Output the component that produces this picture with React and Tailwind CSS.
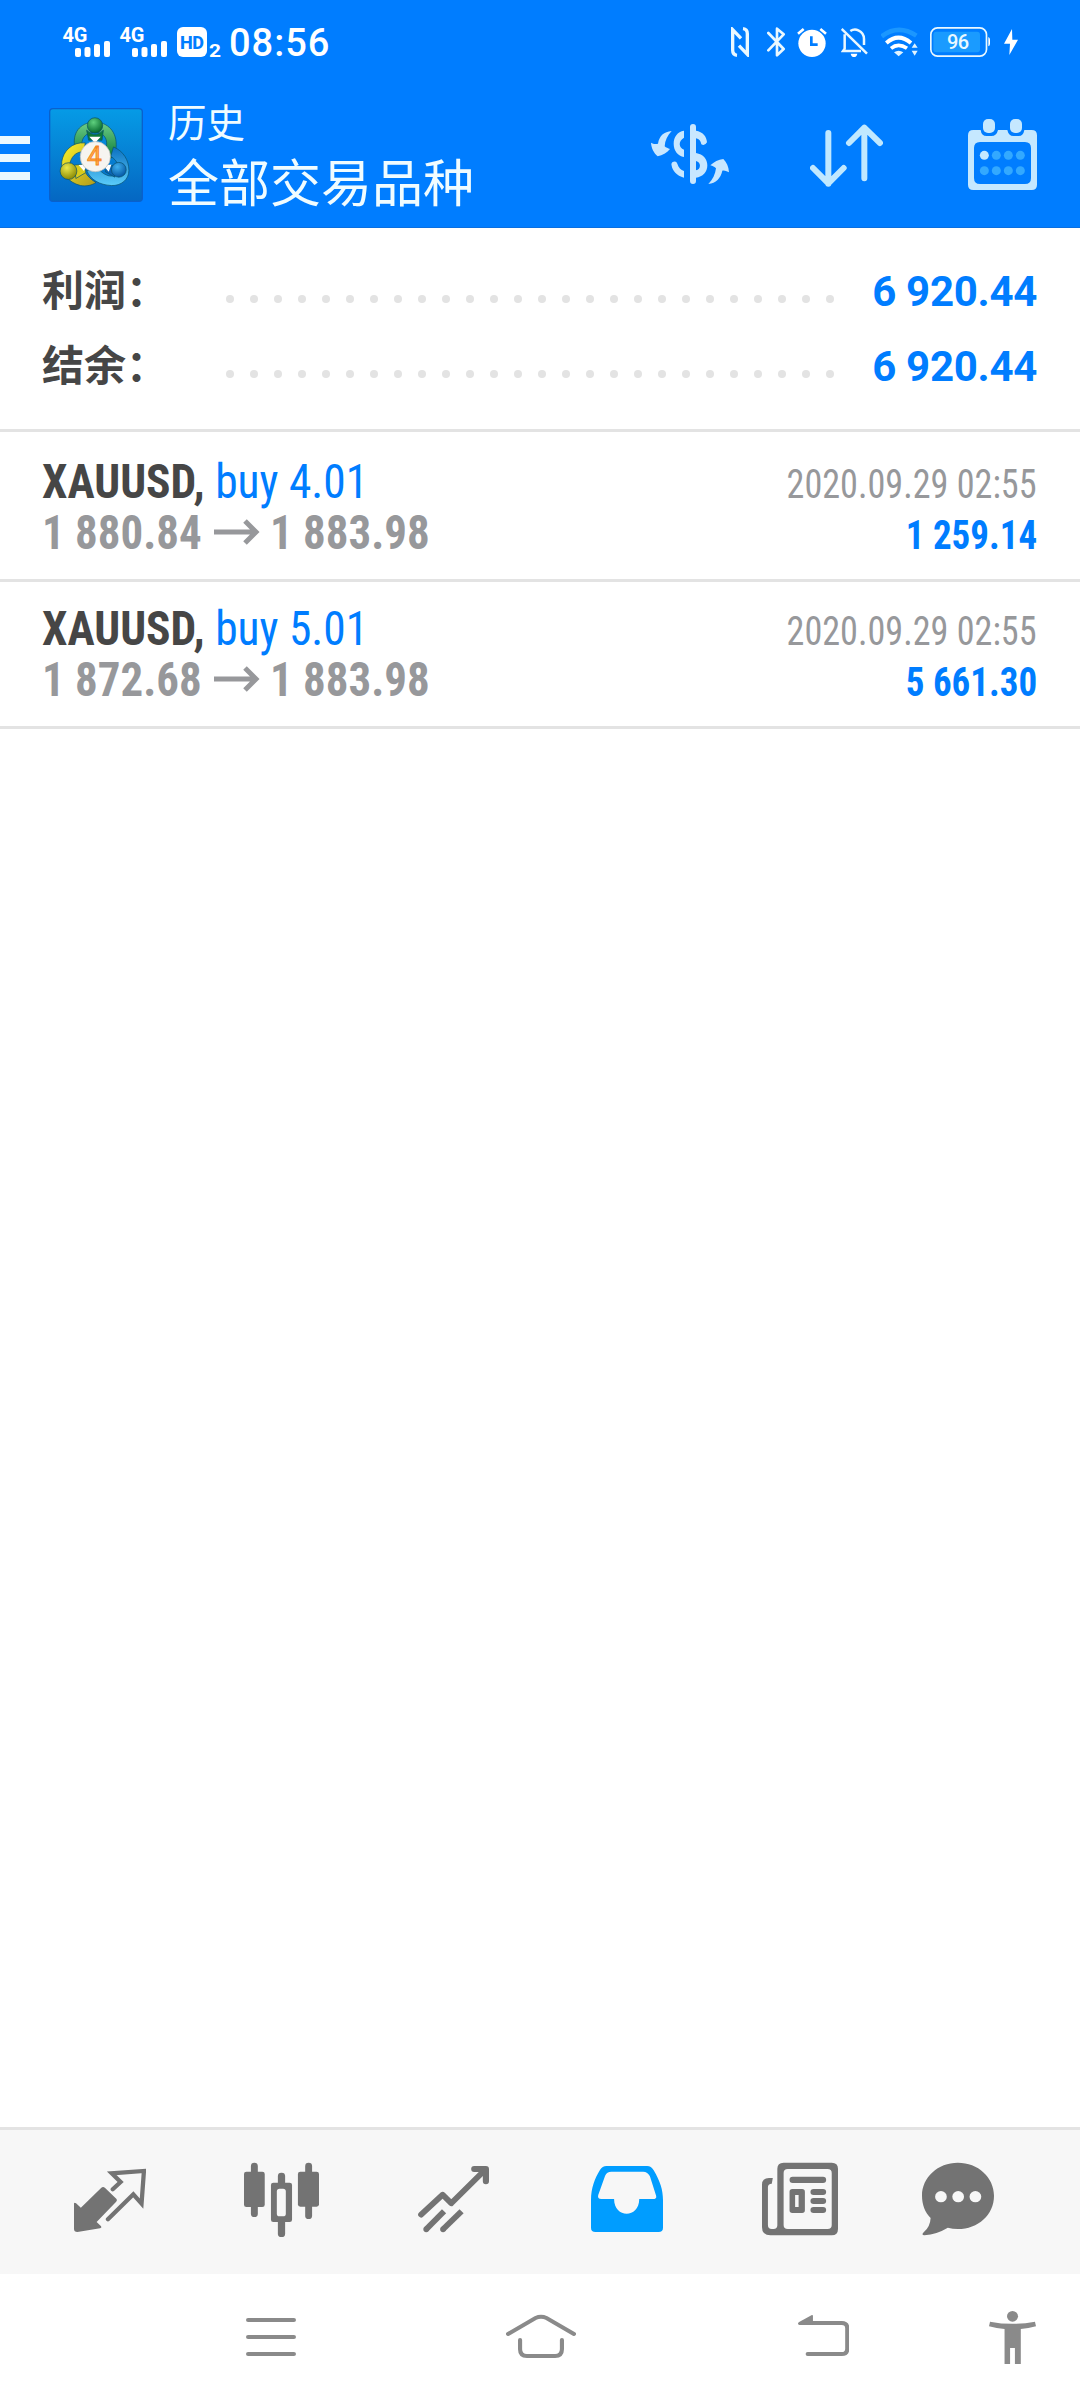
import React from "react";

const trades = [
  { symbol: "XAUUSD", side: "buy 4.01", open: "1 880.84", close: "1 883.98", time: "2020.09.29 02:55", profit: "1 259.14" },
  { symbol: "XAUUSD", side: "buy 5.01", open: "1 872.68", close: "1 883.98", time: "2020.09.29 02:55", profit: "5 661.30" },
];

const summary = [
  { label: "利润：", value: "6 920.44" },
  { label: "结余：", value: "6 920.44" },
];

const Signal = () => (
  <svg className="overflow-visible" width="48" height="32" viewBox="0 0 48 32" fill="#fff">
    <text x="-0.5" y="16" fontFamily="Roboto" fontWeight="700" fontSize="20" textLength="25">4G</text>
    <rect x="12" y="22" width="6" height="9" rx="2" />
    <rect x="21.5" y="21" width="6" height="10" rx="2" />
    <rect x="31" y="18" width="6" height="13" rx="2" />
    <rect x="41" y="15" width="6" height="16" rx="2" />
  </svg>
);

const StatusBar = () => (
  <div className="flex h-[84px] items-center pl-[63px] pr-[62px] text-white">
    <Signal />
    <div className="ml-[9px]">
      <Signal />
    </div>
    <svg className="ml-[9px] overflow-visible" width="44" height="32" viewBox="0 0 44 32">
      <rect x="0" y="1" width="30" height="30" rx="6" fill="#fff" />
      <text x="3" y="22.5" fontFamily="Roboto" fontWeight="800" fontSize="18" textLength="24" fill="#007dff">HD</text>
      <text x="32" y="30.5" fontFamily="Roboto" fontWeight="700" fontSize="18" textLength="12" lengthAdjust="spacingAndGlyphs" fill="#fff">2</text>
    </svg>
    <span className="ml-[8px] pt-[2px] text-[38px] font-medium tracking-[1px]">08:56</span>

    {/* nfc */}
    <svg className="ml-auto" width="18" height="30" viewBox="0 0 54 90" fill="none" stroke="#eaf8ff" strokeWidth="10">
      <path d="M18 85 C9 84 5 80 5 70 V8 L30 34 M36 5 C45 6 49 10 49 20 V82 L24 56" />
    </svg>
    {/* bluetooth */}
    <svg className="ml-[18px]" width="19" height="30" viewBox="0 0 57 90" fill="none" stroke="#eaf8ff" strokeWidth="8" strokeLinejoin="round" strokeLinecap="round">
      <path d="M4 18 L50 66 L30 85 V5 L50 22 L4 70" />
    </svg>
    {/* alarm */}
    <svg className="ml-[11px]" width="30" height="30" viewBox="0 0 90 90">
      <circle cx="45" cy="49" r="41" fill="#fff" />
      <path d="M3 20 L20 6 M87 20 L70 6" stroke="#fff" strokeWidth="8" />
      <path d="M43 28 V53 H62" fill="none" stroke="#007dff" strokeWidth="8" />
    </svg>
    {/* muted bell */}
    <svg className="ml-[14px]" width="27" height="30" viewBox="0 0 81 90" fill="none" stroke="#eaf8ff" strokeWidth="7.5">
      <path d="M2 6 L78 80 M11 22 V65 L6 72 H60 M28 12 Q40 4 52 10 Q69 18 69 36 V54" />
      <path d="M29 80 H49 Q47 90 39 90 T29 80Z" fill="#fff" stroke="none" />
    </svg>
    {/* wifi */}
    <svg className="ml-[13px]" width="38" height="30" viewBox="0 0 114 90" fill="none">
      <path d="M2 28 Q52 -10 106 26" stroke="#1b97ff" strokeWidth="14" />
      <path d="M16 48 Q52 16 90 48" stroke="#fff" strokeWidth="12" />
      <path d="M30 64 Q52 46 78 64" stroke="#fff" strokeWidth="11" />
      <path d="M39 76 Q53 66 67 76 L53 88Z M92 62 L101 49 L110 62Z M92 71 H110 L101 86Z" fill="#dff3ff" />
    </svg>
    {/* battery */}
    <svg className="ml-[11px]" width="60" height="30" viewBox="0 0 180 90">
      <rect x="2.5" y="2.5" width="167" height="85" rx="20" fill="none" stroke="#eaf8ff" strokeWidth="5" />
      <rect x="10" y="14" width="140" height="62" rx="9" fill="#1a9bff" />
      <path d="M175 30 Q180 32 180 38 V50 Q180 56 175 58Z" fill="#fff" />
      <text x="51" y="66" fontFamily="Roboto" fontWeight="500" fontSize="60" textLength="66" fill="#eaf8ff">96</text>
    </svg>
    {/* charging */}
    <svg className="ml-[14px]" width="14" height="26" viewBox="0 0 42 78" fill="#fff">
      <path d="M24 0 L0 44 H18 L16 78 L42 32 H25Z" />
    </svg>
  </div>
);

const Logo = () => (
  <svg className="ml-[19px]" width="94" height="94" viewBox="0 0 280 280">
    <defs>
      <linearGradient id="tile" x1="0" y1="0" x2="0" y2="1">
        <stop offset="0" stopColor="#069be6" />
        <stop offset="1" stopColor="#0567c2" />
      </linearGradient>
      <linearGradient id="green" x1="0" y1="0" x2="0" y2="1">
        <stop offset="0" stopColor="#6fce88" />
        <stop offset="1" stopColor="#087a37" />
      </linearGradient>
      <linearGradient id="yellow" x1="0" y1="0" x2="1" y2="1">
        <stop offset="0" stopColor="#fbf32a" />
        <stop offset="1" stopColor="#b29a1c" />
      </linearGradient>
      <linearGradient id="blue" x1="0" y1="0" x2="0" y2="1">
        <stop offset="0" stopColor="#0a6fc0" />
        <stop offset="1" stopColor="#5bcdfa" />
      </linearGradient>
      <radialGradient id="greenBall" cx=".4" cy=".3" r=".7">
        <stop offset="0" stopColor="#5fd07e" />
        <stop offset="1" stopColor="#06692d" />
      </radialGradient>
      <radialGradient id="yellowBall" cx=".4" cy=".3" r=".7">
        <stop offset="0" stopColor="#ece94c" />
        <stop offset="1" stopColor="#8b8a05" />
      </radialGradient>
      <radialGradient id="blueBall" cx=".4" cy=".3" r=".7">
        <stop offset="0" stopColor="#3fb0ee" />
        <stop offset="1" stopColor="#0558a6" />
      </radialGradient>
    </defs>
    <rect x="2" y="2" width="276" height="276" rx="10" fill="url(#tile)" stroke="#0a60cc" strokeWidth="4" />
    <g stroke="#07506a" strokeWidth="2">
      <path d="M76 112 C70 66 100 42 137 42 C174 42 204 70 200 118 C198 134 192 144 182 152 L166 130 C180 100 168 72 136 72 C112 72 98 88 98 106Z" fill="url(#green)" />
      <path d="M192 116 C222 128 238 156 238 186 C238 214 214 232 186 231 C150 229 124 214 112 186 L150 184 C168 204 190 208 204 196 C212 178 206 158 184 144Z" fill="url(#blue)" />
      <path d="M108 104 C68 100 42 130 38 160 C34 190 56 222 94 231 C112 234 128 230 140 222 C120 210 108 196 104 180 L60 172 C66 146 78 130 104 130Z" fill="url(#yellow)" />
      <path d="M112 66 Q137 92 162 66 L158 96 H118Z" fill="#0c7a3a" />
      <path d="M76 170 L104 168 L110 192 L80 210Z" fill="#d9cb1c" />
      <path d="M200 170 L172 174 L168 190 L196 206Z" fill="#0b64b4" />
      <circle cx="137" cy="52" r="23" fill="url(#greenBall)" />
      <circle cx="58" cy="188" r="25" fill="url(#yellowBall)" />
      <circle cx="208" cy="184" r="22" fill="url(#blueBall)" />
    </g>
    <path d="M120 86 H154 L137 104Z M88 170 L114 168 L104 188Z M186 168 L162 172 L178 190Z" fill="#fff" />
    <circle cx="138" cy="145" r="45" fill="#f6f4f0" stroke="#b9b9b5" strokeWidth="2" />
    <text x="113" y="171" fontFamily="Roboto" fontWeight="400" fontSize="76" textLength="44" lengthAdjust="spacingAndGlyphs" fill="#ffb04a" stroke="#f58220" strokeWidth="2.5">4</text>
  </svg>
);

const Header = () => (
  <header className="h-[228px] border-b border-[#0a6fe0] bg-[#007dff]">
    <StatusBar />
    <div className="flex h-[143px] items-center pb-0.5">
      <div className="flex w-[30px] flex-col gap-2.5 pt-[7px]">
        <div className="h-2 bg-[#eaf8ff]" />
        <div className="h-2 bg-[#eaf8ff]" />
        <div className="h-2 bg-[#eaf8ff]" />
      </div>
      <Logo />
      <div className="ml-[25px] pb-[5px] font-['Noto_Sans_CJK_SC',sans-serif] font-normal text-[#f0fcff]">
        <div className="text-[38.5px] leading-[56px]">历史</div>
        <div className="text-[51px] leading-[64px]">全部交易品种</div>
      </div>

      {/* deposit / currency switch */}
      <svg className="ml-auto" width="78" height="71" viewBox="93 72 234 213" fill="#c8e7ff">
        <path d="M155 108 C132 110 118 122 114 146 C104 148 99 146 93 143 C94 160 102 174 113 184 C128 181 140 174 150 162 C144 160 138 158 134 154 C135 136 142 122 155 108Z" />
        <path d="M265 267 C288 264 302 250 307 227 C316 226 322 230 327 232 C326 214 320 202 310 192 C295 194 282 200 271 211 C278 213 284 215 288 220 C286 238 278 254 265 267Z" />
        <path d="M192 107 C172 110 161 126 161 146 C161 168 174 182 192 186 V164 C176 158 174 138 192 128Z" />
        <path d="M192 248 C170 242 157 226 155 212 A9 9 0 0 1 172 206 C176 218 182 224 192 228Z" />
        <path fillRule="evenodd" d="M228 107 C248 110 260 124 261 142 Q254 154 244 148 C242 138 238 132 228 130 V174 C250 178 262 192 262 211 C262 232 248 246 228 248 V258 A9 9 0 0 1 210 258 V96 A9 9 0 0 1 228 96Z M228 198 V226 C244 224 244 201 228 198Z" />
      </svg>
      {/* sort */}
      <svg className="ml-[81px]" width="73" height="71" viewBox="569 72 219 213" fill="none" stroke="#c0e8ff" strokeWidth="18" strokeLinecap="round" strokeLinejoin="round">
        <path d="M624 114 V266 M578 219 L624 265 L670 219" />
        <path d="M732 250 V98 M686 144 L732 98 L779 144" />
      </svg>
      {/* calendar */}
      <svg className="ml-[85px] mr-[43px]" width="69" height="71" viewBox="1044 72 207 213">
        <path fillRule="evenodd" fill="#c5e8ff" d="M1060 105 H1082 Q1084 123 1100 123 H1114 Q1130 123 1134 105 H1162 Q1166 123 1180 123 H1196 Q1210 123 1213 105 H1235 Q1251 105 1251 121 V269 Q1251 285 1235 285 H1060 Q1044 285 1044 269 V121 Q1044 105 1060 105Z M1080 141 Q1062 141 1062 159 V249 Q1062 267 1080 267 H1215 Q1233 267 1233 249 V159 Q1233 141 1215 141Z" />
        <rect x="1089" y="72" width="36" height="42" rx="15" fill="#c5e8ff" />
        <rect x="1170" y="72" width="36" height="42" rx="15" fill="#c5e8ff" />
        {[1093, 1129, 1165, 1201].map((x) => (
          <g key={x} fill="#33a9ff">
            <circle cx={x} cy="181" r="13.5" fill={x === 1093 ? "#c5e8ff" : "#33a9ff"} />
            <circle cx={x} cy="227" r="13.5" />
          </g>
        ))}
      </svg>
    </div>
  </header>
);

const SummaryRow = ({ label, value }) => (
  <div className="flex h-[75px] items-center pl-[42px] pr-[43px]">
    <span className="w-[184px] pb-[6px] font-['Noto_Sans_CJK_SC',sans-serif] text-[42px] font-bold leading-[69px] text-[#464646]">{label}</span>
    <div className="flex gap-4 pt-[17px]">
      {Array.from({ length: 26 }).map((_, i) => (
        <span key={i} className="size-2 rounded-full bg-[#e3e3e3]" />
      ))}
    </div>
    <span className="ml-auto pt-px text-[42px] font-bold tracking-[-0.3px] text-[#007dff]">{value}</span>
  </div>
);

const TradeRow = ({ trade }) => (
  <div className="h-[147px] whitespace-nowrap border-b-[3px] border-[#e3e3e3] pl-[42px] pr-[43px] pt-[21px] font-['Roboto_Condensed',Roboto,sans-serif] [font-stretch:75%]">
    <div className="flex h-[51px] items-baseline justify-between leading-[51px]">
      <div className="origin-left scale-x-[0.947] text-[48px] text-[#007dff]">
        <span className="font-bold text-[#464646]">{trade.symbol},</span> {trade.side}
      </div>
      <div className="origin-right scale-x-[0.904] text-[40px] text-[#97989b]">{trade.time}</div>
    </div>
    <div className="flex h-[51px] items-baseline justify-between font-bold leading-[51px]">
      <div className="flex text-[48px] text-[#97989b]">
        <span className="w-[172px] origin-left scale-x-[0.936]">{trade.open}</span>
        <svg className="mr-2.5 mt-3" width="46" height="26" viewBox="0 0 46 26" fill="none" stroke="#97989b" strokeWidth="5">
          <path d="M0 13 H42 M31 2 L42 13 L31 24" />
        </svg>
        <span className="origin-left scale-x-[0.936]">{trade.close}</span>
      </div>
      <div className="origin-right scale-x-[0.925] text-[40px] text-[#007dff]">{trade.profit}</div>
    </div>
  </div>
);

const TabBar = () => (
  <nav className="flex h-[147px] items-center border-t-[3px] border-[#e3e3e3] bg-[#f7f7f7] pb-1 pl-[74px]">
    {/* quotes */}
    <svg width="72" height="80" viewBox="215 150 210 240" preserveAspectRatio="none" fill="#737373">
      <path d="M215 280 Q217 276 221 280 L235 293 L294 234 Q299 229 305 233 L339 267 Q342 271 338 275 L281 336 L294 349 Q297 353 291 355 L225 366 Q215 366 215 357Z" />
      <path d="M328 238 L351 216 L325 190 L419 183 L412 281 L388 253 L314 328" fill="none" stroke="#737373" strokeWidth="12.5" strokeLinecap="round" />
    </svg>
    {/* chart */}
    <svg className="ml-[98px]" width="75" height="80" viewBox="709 150 217 240" preserveAspectRatio="none" fill="#737373">
      <rect x="729" y="158" width="20" height="163" rx="10" />
      <rect x="709" y="185" width="60" height="106" rx="7" />
      <rect x="886" y="158" width="20" height="169" rx="10" />
      <rect x="865" y="185" width="61" height="105" rx="7" />
      <rect x="807" y="188" width="21" height="40" rx="10" />
      <rect x="807" y="325" width="21" height="56" rx="10" />
      <path fillRule="evenodd" d="M794 218 H841 Q848 218 848 225 V329 Q848 336 841 336 H794 Q787 336 787 329 V225 Q787 218 794 218Z M812 236 Q804 236 804 244 V311 Q804 319 812 319 H822 Q830 319 830 311 V244 Q830 236 822 236Z" />
    </svg>
    {/* trade */}
    <svg className="ml-[99px]" width="71" height="80" viewBox="1213 150 207 240" preserveAspectRatio="none" fill="none" stroke="#737373" strokeWidth="17" strokeLinejoin="round">
      <path d="M1222 314 L1285 254 L1310 280 L1408 180" strokeLinecap="round" />
      <path d="M1377 177 H1411 V214" strokeWidth="18" strokeLinecap="round" />
      <path d="M1237 358 L1289 304" />
      <path d="M1286 358 L1340 304" />
      <path d="M1237 358 h.1 M1286 358 h.1" strokeLinecap="round" />
    </svg>
    {/* history */}
    <svg className="ml-[102px]" width="72" height="80" viewBox="147 150 209 240" preserveAspectRatio="none">
      <path fill="#009dff" fillRule="evenodd" d="M192 168 H310 Q322 168 329 181 C348 215 356 240 356 270 V353 Q356 366 343 366 H160 Q147 366 147 353 V270 C147 235 158 205 173 180 Q180 168 192 168Z M206 185 Q193 185 188 197 L168 255 Q165 267 177 267 H214 C214 326 287 326 287 267 H326 Q339 267 336 257 L318 199 Q312 185 298 185Z" />
    </svg>
    {/* news */}
    <svg className="ml-[99px]" width="76" height="80" viewBox="646 150 218 240" preserveAspectRatio="none" fill="#737373">
      <path fillRule="evenodd" d="M690 176 Q690 158 708 158 H846 Q864 158 864 176 V357 Q864 376 846 376 H670 Q646 376 646 352 V224 Q646 204 666 204 H677 L674 221 Q663 221 663 232 V345 Q663 357 674 357 H679 Q690 357 690 346Z M720 177 Q708 177 708 189 V345 Q708 357 720 357 H834 Q846 357 846 345 V189 Q846 177 834 177Z" />
      <rect x="725" y="200" width="105" height="19" rx="9" />
      <path fillRule="evenodd" d="M733 237 H761 Q769 237 769 245 V301 Q769 309 761 309 H733 Q725 309 725 301 V245 Q725 237 733 237Z M741 255 V291 H751 V255Z" />
      <rect x="785" y="237" width="45" height="18" rx="9" />
      <rect x="785" y="264" width="45" height="18" rx="9" />
      <rect x="785" y="291" width="45" height="18" rx="9" />
    </svg>
    {/* chat */}
    <svg className="ml-[84px]" width="72" height="80" viewBox="1109 150 209 240" preserveAspectRatio="none">
      <path fill="#737373" d="M1213 158 C1272 158 1318 202 1318 257 C1318 314 1272 357 1213 357 Q1198 357 1184 353 Q1152 373 1116 376 Q1106 375 1114 367 Q1133 350 1134 324 C1118 307 1109 284 1109 257 C1109 202 1155 158 1213 158Z" />
      <g fill="#f7f7f7">
        <circle cx="1164" cy="260" r="17" />
        <circle cx="1214" cy="260" r="17" />
        <circle cx="1264" cy="260" r="17" />
      </g>
    </svg>
  </nav>
);

const SystemNav = () => (
  <div className="flex h-[126px] items-center pl-[246px]">
    <svg width="50" height="55" viewBox="714 600 145 165" preserveAspectRatio="none" stroke="#8a8a8a" strokeWidth="12" strokeLinecap="round">
      <path d="M720 630 H853 M720 681 H853 M720 732 H853" />
    </svg>
    <svg className="ml-[210px]" width="70" height="55" viewBox="0 600 204 165" preserveAspectRatio="none" fill="none" stroke="#8a8a8a" strokeWidth="12" strokeLinecap="round">
      <path d="M6 672 L86 624 Q102 617 118 624 L198 672" />
      <path d="M41 690 V718 Q41 738 61 738 H143 Q163 738 163 718 V690" />
    </svg>
    <svg className="ml-[222px]" width="51" height="55" viewBox="750 600 147 165" preserveAspectRatio="none">
      <path d="M790 639 H876 Q892 639 892 655 V716 Q892 732 876 732 H778" fill="none" stroke="#8a8a8a" strokeWidth="12" strokeLinecap="round" />
      <path d="M752 637 L790 615 Q793 614 793 618 V645 H754 Q747 643 752 637Z" fill="#8a8a8a" />
    </svg>
    <svg className="ml-[140px]" width="47" height="55" viewBox="1304 600 136 165" preserveAspectRatio="none" fill="#8a8a8a">
      <circle cx="1372" cy="619" r="16" />
      <path d="M1307 635 Q1372 648 1437 635 L1440 649 Q1418 655 1396 657 V762 H1379 V714 H1365 V762 H1349 V657 Q1326 655 1304 649Z" />
    </svg>
  </div>
);

const App = () => {
  return (
    <div className="flex h-[2400px] w-[1080px] flex-col overflow-hidden bg-white font-[Roboto,sans-serif]">
      <Header />
      <section className="h-[204px] border-b-[3px] border-[#e3e3e3] pt-[25px]">
        {summary.map((row) => (
          <SummaryRow key={row.label} {...row} />
        ))}
      </section>
      <main className="flex-1 pt-[3px]">
        {trades.map((trade) => (
          <TradeRow key={trade.side} trade={trade} />
        ))}
      </main>
      <TabBar />
      <SystemNav />
    </div>
  );
};

export default App;
